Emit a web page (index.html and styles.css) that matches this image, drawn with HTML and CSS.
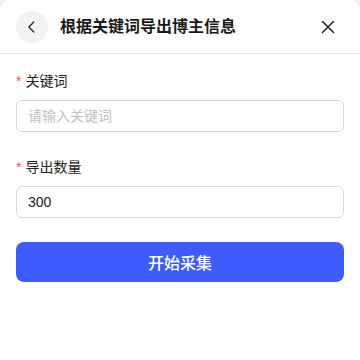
FILE: index.html
```html
<!DOCTYPE html>
<html lang="zh-CN">
<head>
    <meta charset="UTF-8">
    <meta name="viewport" content="width=device-width, initial-scale=1.0">
    <title>根据关键词导出博主信息</title>
    <link rel="stylesheet" href="styles.css">
</head>
<body>
    <div class="panel">
        <div class="header">
            <button type="button" class="back-btn" aria-label="返回">
                <svg width="16" height="16" viewBox="0 0 16 16"><polyline points="9.8,3 4.8,8 9.8,13" fill="none" stroke="#222" stroke-width="1.2" stroke-linecap="round" stroke-linejoin="round"/></svg>
            </button>
            <h1 class="title">根据关键词导出博主信息</h1>
            <button type="button" class="close-btn" aria-label="关闭">
                <svg width="14" height="14" viewBox="0 0 14 14"><path d="M1.5 1.5 L12.5 12.5 M12.5 1.5 L1.5 12.5" fill="none" stroke="#222" stroke-width="1.5" stroke-linecap="round"/></svg>
            </button>
        </div>

        <div class="form-section">
            <div class="form-item">
                <label for="keyword"><span class="required">*</span>关键词</label>
                <input type="text" id="keyword" placeholder="请输入关键词">
            </div>
            <div class="form-item">
                <label for="count"><span class="required">*</span>导出数量</label>
                <input type="text" id="count" value="300">
            </div>
            <button type="button" class="submit-btn">开始采集</button>
        </div>
    </div>
</body>
</html>
```

FILE: styles.css
```css
html, body {
    margin: 0;
    padding: 0;
    background: #f2f2f2;
}
body {
    font-family: "Liberation Sans", "Noto Sans CJK SC", sans-serif;
    color: #222;
}
.panel {
    background: #fff;
    min-height: 360px;
    border-radius: 10px 10px 0 0;
}
.header {
    display: flex;
    align-items: center;
    height: 53px;
    padding: 0 20px 0 16px;
    border-bottom: 1px solid #e6e6e6;
}
.back-btn {
    width: 32px;
    height: 32px;
    border: none;
    border-radius: 50%;
    background: #f2f2f2;
    padding: 0;
    display: flex;
    align-items: center;
    justify-content: center;
}
.title {
    flex: 1;
    margin: 0 0 0 12px;
    font-size: 16px;
    font-weight: bold;
    color: #1a1a1a;
    line-height: 22px;
}
.close-btn {
    width: 24px;
    height: 24px;
    border: none;
    background: none;
    padding: 0;
    display: flex;
    align-items: center;
    justify-content: center;
}
.form-section {
    padding: 16px 16px 0;
}
.form-item {
    margin-bottom: 24px;
}
.form-item label {
    display: block;
    font-size: 14px;
    line-height: 22px;
    margin-bottom: 8px;
    color: #222;
}
.required {
    color: #ff4d4f;
    margin-right: 4px;
    font-family: "Liberation Sans", sans-serif;
}
.form-item input {
    display: block;
    box-sizing: border-box;
    width: 100%;
    height: 32px;
    padding: 0 11px;
    border: 1px solid #d9d9d9;
    border-radius: 6px;
    font-family: "Liberation Sans", "Noto Sans CJK SC", sans-serif;
    font-size: 14px;
    color: #222;
    outline: none;
}
.form-item input::placeholder {
    color: #bfbfbf;
}
.submit-btn {
    display: block;
    width: 100%;
    height: 40px;
    border: none;
    border-radius: 8px;
    background: #3e5cfb;
    color: #fff;
    font-family: "Noto Sans CJK SC", sans-serif;
    font-size: 16px;
    font-weight: 500;
}
```
